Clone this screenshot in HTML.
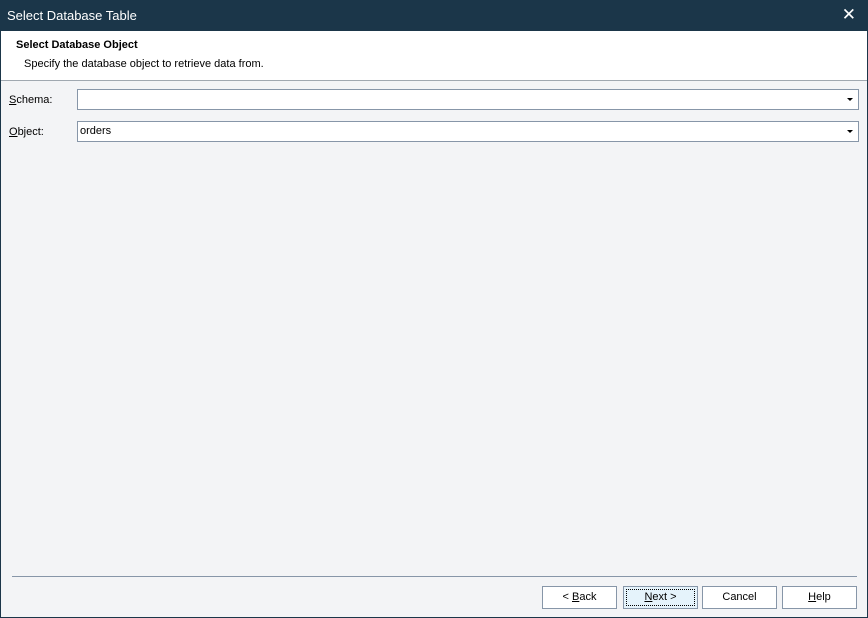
<!DOCTYPE html>
<html><head><style>
*{margin:0;padding:0;box-sizing:border-box}
body{width:868px;height:618px;overflow:hidden;font-family:"Liberation Sans",sans-serif;font-size:11px;color:#000;background:#f3f4f6;position:relative}
.t{position:absolute;left:0;top:0;width:868px;height:31px;background:#1b3649;color:#fff;font-size:13px;padding:8px 0 0 7px}
.x{position:absolute;right:12px;top:5px;font-size:17px;color:#fff;font-family:"DejaVu Sans",sans-serif}
.w{position:absolute;left:0;top:31px;width:868px;height:587px;border:1px solid #1b3649;border-top:none}
.h{position:absolute;left:1px;top:31px;width:866px;height:50px;background:#fff;border-bottom:1px solid #a0a8b0}
.lbl{position:absolute;left:9px}
.in{position:absolute;left:77px;width:782px;height:21px;background:#fff;border:1px solid #8796a8;padding:3px 2px}
.ar{position:absolute;right:5px;top:8px;width:0;height:0;border-left:3px solid transparent;border-right:3px solid transparent;border-top:3px solid #000}
.ln{position:absolute;left:12px;top:576px;width:845px;height:1px;background:#8796a8}
.b{position:absolute;top:586px;height:23px;width:75px;background:#fff;border:1px solid #8796a8;text-align:center;line-height:21px}
u{text-decoration:underline}
</style></head><body>
<div class="t">Select Database Table</div><div class="x">✕</div>
<div class="w"></div>
<div class="h"><div style="position:absolute;left:15px;top:8px;font-weight:bold">Select Database Object</div><div style="position:absolute;left:23px;top:27px">Specify the database object to retrieve data from.</div></div>
<div class="lbl" style="top:94px"><u>S</u>chema:</div>
<div class="in" style="top:89px"><div class="ar"></div></div>
<div class="lbl" style="top:126px"><u>O</u>bject:</div>
<div class="in" style="top:121px">orders<div class="ar"></div></div>
<div class="ln"></div>
<div class="b" style="left:542px">&lt; <u>B</u>ack</div>
<div class="b" style="left:623px;background:#e5f3fb"><div style="position:absolute;inset:2px;border:1px dotted #000;line-height:15px"><u>N</u>ext &gt;</div></div>
<div class="b" style="left:702px">Cancel</div>
<div class="b" style="left:782px"><u>H</u>elp</div>
</body></html>
